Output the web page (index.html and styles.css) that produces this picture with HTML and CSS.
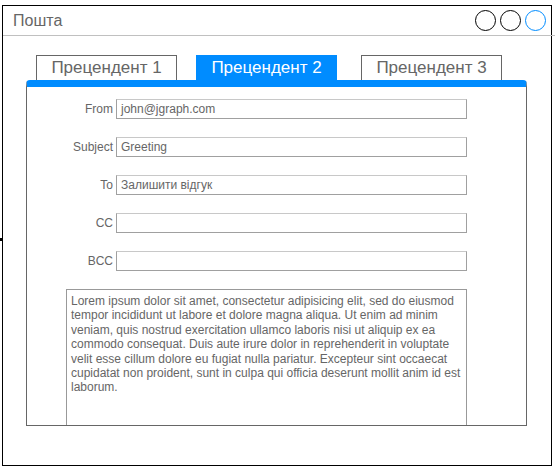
FILE: index.html
```html
<!DOCTYPE html>
<html lang="uk">
<head>
<meta charset="utf-8">
<title>Пошта</title>
<link rel="stylesheet" href="styles.css">
</head>
<body>
<div class="window">
  <div class="header">
    <div class="title">Пошта</div>
    <div class="controls">
      <span class="dot"></span>
      <span class="dot"></span>
      <span class="dot dot-blue"></span>
    </div>
  </div>
  <div class="content">
    <div class="tabs">
      <div class="tab tab-1">Прецендент 1</div>
      <div class="tab tab-2 active">Прецендент 2</div>
      <div class="tab tab-3">Прецендент 3</div>
    </div>
    <div class="panel">
      <div class="form">
        <label class="label">From</label>
        <div class="field">john@jgraph.com</div>
        <label class="label">Subject</label>
        <div class="field">Greeting</div>
        <label class="label">To</label>
        <div class="field">Залишити відгук</div>
        <label class="label">CC</label>
        <div class="field"></div>
        <label class="label">BCC</label>
        <div class="field"></div>
      </div>
      <div class="message">Lorem ipsum dolor sit amet, consectetur adipisicing elit, sed do eiusmod tempor incididunt ut labore et dolore magna aliqua. Ut enim ad minim veniam, quis nostrud exercitation ullamco laboris nisi ut aliquip ex ea commodo consequat. Duis aute irure dolor in reprehenderit in voluptate velit esse cillum dolore eu fugiat nulla pariatur. Excepteur sint occaecat cupidatat non proident, sunt in culpa qui officia deserunt mollit anim id est laborum.</div>
    </div>
  </div>
</div>
</body>
</html>
```
FILE: styles.css
```css
html, body {
  margin: 0;
  padding: 0;
  background: #fff;
}
body {
  font-family: "Liberation Sans", Arial, sans-serif;
  color: #666;
}
.window {
  position: relative;
  box-sizing: border-box;
  margin: 5px 0 0 2px;
  width: 550px;
  height: 461px;
  border: 1px solid #000;
  display: flex;
  flex-direction: column;
}
.window::before {
  content: "";
  position: absolute;
  left: -3px;
  top: 232px;
  width: 2px;
  height: 3px;
  background: #000;
}
.header {
  box-sizing: border-box;
  height: 30px;
  margin-right: -4px;
  padding: 0 9px 0 10px;
  border-bottom: 1px solid #c0c0c0;
  display: flex;
  align-items: center;
  justify-content: space-between;
}
.title {
  font-size: 16px;
  color: #666;
}
.controls {
  display: flex;
  gap: 4px;
}
.dot {
  box-sizing: border-box;
  width: 21px;
  height: 21px;
  border: 1px solid #000;
  border-radius: 50%;
}
.dot-blue {
  border-color: #008cff;
}
.content {
  padding: 19px 0 0 23px;
}
.tabs {
  display: flex;
  height: 25px;
  padding-left: 10px;
}
.tab {
  box-sizing: border-box;
  width: 141px;
  height: 25px;
  border: 1px solid #666;
  border-bottom: none;
  font-size: 17px;
  color: #666;
  display: flex;
  align-items: center;
  justify-content: center;
  background: #fff;
}
.tab-2 {
  margin-left: 19px;
}
.tab-3 {
  margin-left: 24px;
}
.tab.active {
  background: #008cff;
  border-color: #008cff;
  color: #fff;
}
.panel {
  box-sizing: border-box;
  width: 501px;
  height: 346px;
  border: 1px solid #666;
  border-top: 7px solid #008cff;
  border-radius: 4px 4px 0 0;
}
.form {
  display: grid;
  grid-template-columns: 86px 351px;
  column-gap: 3px;
  row-gap: 18px;
  padding-top: 12px;
  align-items: center;
}
.label {
  font-size: 12px;
  text-align: right;
  color: #666;
}
.field {
  box-sizing: border-box;
  height: 20px;
  border: 1px solid #a0a0a0;
  border-top-color: #c8c8c8;
  padding: 0 4px;
  font-size: 12px;
  line-height: 18px;
  color: #666;
}
.message {
  box-sizing: border-box;
  margin: 18px 0 0 39px;
  width: 401px;
  height: 136px;
  border: 1px solid #999;
  border-bottom: none;
  padding: 4px 4px;
  font-size: 12px;
  line-height: 14.4px;
  color: #666;
}
```
